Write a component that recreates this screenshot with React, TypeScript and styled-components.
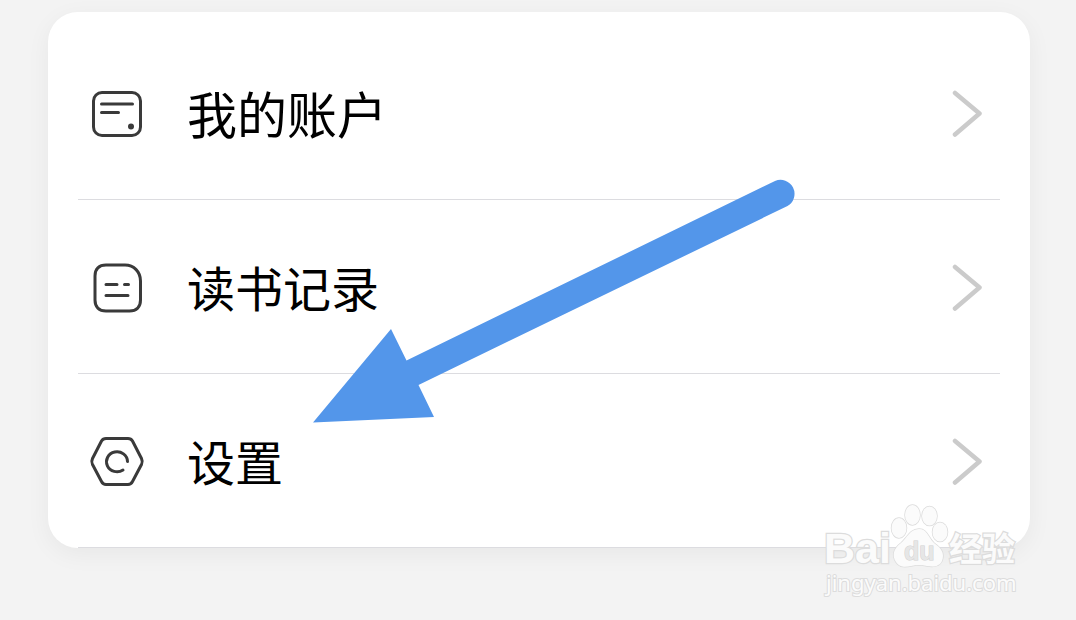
import React from "react";
import styled, { createGlobalStyle } from "styled-components";

const GlobalStyle = createGlobalStyle`
  * { box-sizing: border-box; }
  body {
    margin: 0;
    background: #f3f3f3;
    font-family: "Noto Sans CJK SC", sans-serif;
  }
`;

const Page = styled.main`
  padding: 12px 46px 72px 48px;
`;

const Card = styled.nav`
  position: relative;
  padding: 14px 30px 0;
  background: #fff;
  border-radius: 30px;
  box-shadow: 0 6px 24px rgba(0, 0, 0, 0.05);
`;

const List = styled.ul`
  margin: 0;
  padding: 0;
  list-style: none;
`;

const Row = styled.li`
  border-bottom: 1px solid #dcdce0;
`;

const RowButton = styled.button`
  display: flex;
  align-items: center;
  width: 100%;
  height: 173px;
  padding: 2px 18px 0 11px;
  border: 0;
  background: transparent;
  color: #000;
  font-family: inherit;
  text-align: left;
  cursor: pointer;
`;

const RowIcon = styled.svg`
  flex: none;
  width: 56px;
  height: 56px;
  fill: none;
  stroke: #3a3a3a;
  stroke-width: 3;
  stroke-linecap: round;
  stroke-linejoin: round;
`;

const Label = styled.span<{ $large?: boolean }>`
  flex: 1;
  margin-left: 42px;
  padding-bottom: 4px;
  font-size: ${(p) => (p.$large ? 50 : 48)}px;
  line-height: 64px;
`;

const Chevron = styled.svg`
  flex: none;
  width: 32px;
  height: 50px;
  fill: none;
  stroke: #cbcbcb;
  stroke-width: 4.5;
  stroke-linecap: round;
  stroke-linejoin: round;
`;

const Arrow = styled.svg`
  position: absolute;
  left: 264px;
  top: 166px;
  width: 486px;
  height: 246px;
  pointer-events: none;
`;

const Watermark = styled.div`
  position: absolute;
  right: 8px;
  bottom: -52px;
  width: 200px;
  height: 100px;
  pointer-events: none;

  svg {
    display: block;
    width: 200px;
    height: 100px;
  }
`;

const AccountIcon = () => (
  <RowIcon viewBox="0 0 56 56" aria-hidden="true">
    <rect x="4.5" y="6.5" width="47" height="43" rx="8.5" />
    <path d="M12.5 18h31M12.5 26.5h17" />
    <circle cx="42" cy="40.5" r="3" fill="#3a3a3a" stroke="none" />
  </RowIcon>
);

const RecordIcon = () => (
  <RowIcon viewBox="0 0 56 56" aria-hidden="true">
    <path d="M17 5h19c9 0 15.500 7 15.500 16v19c0 7-4 11-11 11H17c-7 0-11-4-11-11V16C6 9 10 5 17 5Z" />
    <path d="M17 24.500h11M35.500 24.500h4M17 35.500h22" />
  </RowIcon>
);

const SettingsIcon = () => (
  <RowIcon viewBox="0 0 56 56" aria-hidden="true">
    <path d="M17 4.500h22q3 0 4.500 2.500L52.500 24.500q1.500 3 0 6L43.500 47.500q-1.500 3-4.500 3H17q-3 0-4.500-3L3.500 30.500q-1.500-3 0-6L12.500 7Q14 4.500 17 4.500Z" />
    <path d="M38.500 27.500A10.500 10 0 1 0 34 36" />
  </RowIcon>
);

const items = [
  { label: "我的账户", icon: <AccountIcon />, large: true },
  { label: "读书记录", icon: <RecordIcon /> },
  { label: "设置", icon: <SettingsIcon /> },
];

const BaiduMark = () => (
  <svg viewBox="0 0 200 100" aria-hidden="true">
    <g
      fill="#fbfbfb"
      stroke="#dcdcdc"
      strokeWidth="1.5"
      fontWeight="700"
      paintOrder="stroke"
    >
      <g strokeWidth="2.500">
        <text x="2" y="63" fontSize="43" fontFamily="Liberation Sans, sans-serif">
          Bai
        </text>
        <text x="127" y="61" fontSize="33" fontFamily="Noto Sans CJK SC, sans-serif">
          经验
        </text>
        <text
          x="4"
          y="91"
          fontSize="22"
          fontWeight="400"
          fontFamily="Noto Sans, sans-serif"
          strokeWidth="2"
        >
          jingyan.baidu.com
        </text>
      </g>
      <ellipse cx="77" cy="28" rx="7.500" ry="10" />
      <ellipse cx="90.500" cy="15" rx="7.500" ry="10" />
      <ellipse cx="107.500" cy="16" rx="7.500" ry="9.500" />
      <ellipse cx="118" cy="32" rx="7.500" ry="9.500" />
      <path d="M97 29c-9 0-12 9-18 14-8 6-9 13-5 19 4 6 10 5 15 4q8-2 16 0c6 1 12 1 15-5 3-8-1-13-8-18-6-6-7-14-15-14Z" />
      <text
        x="82"
        y="60"
        fontSize="25"
        fill="#e6e6e6"
        stroke="#d0d0d0"
        strokeWidth="1"
        fontFamily="Liberation Sans, sans-serif"
      >
        du
      </text>
    </g>
  </svg>
);

export default function App() {
  return (
    <>
      <GlobalStyle />
      <Page>
        <Card>
          <List>
            {items.map((item) => (
              <Row key={item.label}>
                <RowButton type="button">
                  {item.icon}
                  <Label $large={item.large}>{item.label}</Label>
                  <Chevron viewBox="0 0 32 50" aria-hidden="true">
                    <path d="M5 4 29.500 24.500 5 45.500" />
                  </Chevron>
                </RowButton>
              </Row>
            ))}
          </List>
          <Arrow viewBox="0 0 486 246" aria-hidden="true">
            <path
              fill="#5396ea"
              d="M1 244.500 79 151l15.500 31.500L463 3a14 14 0 0 1 12.500 25L106.500 207 122 239Z"
            />
          </Arrow>
          <Watermark>
            <BaiduMark />
          </Watermark>
        </Card>
      </Page>
    </>
  );
}
